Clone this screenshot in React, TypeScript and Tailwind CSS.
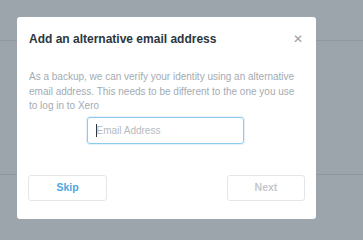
export default function App() {
  return (
    <div
      className="relative w-[363px] h-[240px] bg-[#9ca4ac] overflow-hidden"
      style={{ fontFamily: '"Liberation Sans", Arial, sans-serif' }}
    >
      <div className="h-[41px] border-b border-[#8f979f]" />
      <div className="h-[134px] border-b border-[#8f979f]" />

      <div className="absolute left-[17px] top-[17px] w-[299px] h-[202px] bg-white rounded-[3px] flex flex-col">
        <div className="flex items-center justify-between pl-[12px] pr-[13px] pt-[14px]">
          <h2 className="text-[12px] font-bold text-[#2b3640] leading-[16px]">
            Add an alternative email address
          </h2>
          <span className="text-[#9aa0a6] text-[12px] leading-none">✕</span>
        </div>
        <p className="mt-[23px] px-[12px] text-[10px] leading-[14.5px] text-[#a3abb3]">
          As a backup, we can verify your identity using an alternative email address. This needs to be different to the one you use to log in to Xero
        </p>
        <div className="flex justify-center mt-[3px] mr-[3px]">
          <div className="w-[157px] h-[27px] border border-[#8ccbec] rounded-[3px] flex items-center pl-[8px] shadow-[0_0_0_1px_#e3f2fa]">
            <span className="w-px h-[13px] bg-[#333]" />
            <span className="text-[10px] text-[#b4bac0]">Email Address</span>
          </div>
        </div>
        <div className="flex justify-between mt-[31px] px-[11px]">
          <button className="w-[79px] h-[26px] border border-[#e3e6e9] rounded-[3px] text-[10.5px] font-bold text-[#4ea6e0]">
            Skip
          </button>
          <button className="w-[78px] h-[26px] border border-[#e3e6e9] rounded-[3px] text-[10.5px] font-bold text-[#c4c8cc]">
            Next
          </button>
        </div>
      </div>
    </div>
  );
}
